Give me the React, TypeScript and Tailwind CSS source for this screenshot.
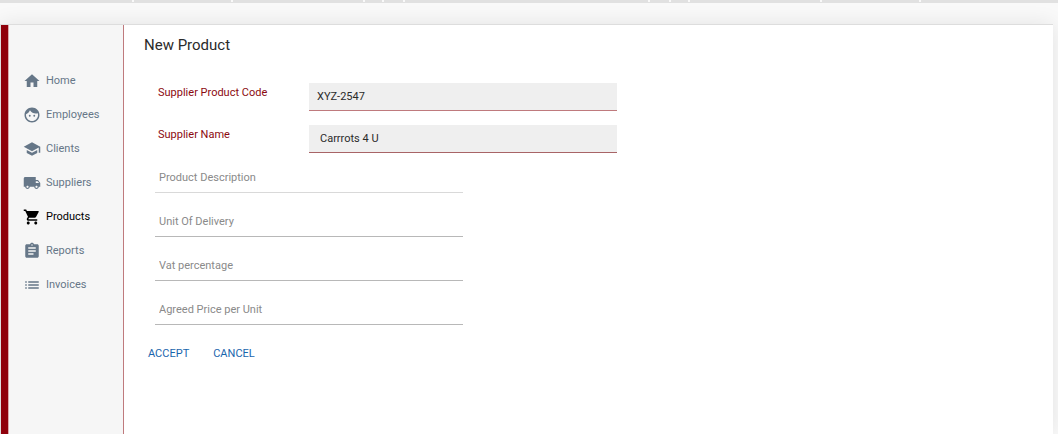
import { useState } from 'react';
import type { IconType } from 'react-icons';
import {
  MdAssignment,
  MdFace,
  MdHome,
  MdList,
  MdLocalShipping,
  MdSchool,
  MdShoppingCart,
} from 'react-icons/md';

const tabs = [
  'grow-[132]',
  'grow-[97]',
  'grow-[130]',
  'grow-[17]',
  'grow-[19]',
  'grow-[243]',
  'grow-[19]',
  'grow-[17]',
  'grow-[130]',
  'grow-[97]',
  'grow-[137]',
];

const navItems: { label: string; icon: IconType }[] = [
  { label: 'Home', icon: MdHome },
  { label: 'Employees', icon: MdFace },
  { label: 'Clients', icon: MdSchool },
  { label: 'Suppliers', icon: MdLocalShipping },
  { label: 'Products', icon: MdShoppingCart },
  { label: 'Reports', icon: MdAssignment },
  { label: 'Invoices', icon: MdList },
];

const detailFields = [
  { label: 'Product Description', line: 'border-[#d9d9d9]' },
  { label: 'Unit Of Delivery', line: 'border-[#b8b8b8]' },
  { label: 'Vat percentage', line: 'border-[#b8b8b8]' },
  { label: 'Agreed Price per Unit', line: 'border-[#b8b8b8]' },
];

function TabStrip() {
  return (
    <div className="flex h-[3px] shrink-0 gap-[2px] border-b border-[#e1e1e1]">
      {tabs.map((grow, i) => (
        <div key={i} className={`basis-0 bg-[#e1e1e1] ${grow}`} />
      ))}
    </div>
  );
}

function Sidebar() {
  return (
    <nav className="w-[116px] shrink-0 border-x border-l-[#d9a9ac] border-r-[#bf7a7d] bg-[#f6f6f6] pt-[39px]">
      <ul>
        {navItems.map(({ label, icon: Icon }) => (
          <li key={label}>
            <a
              href={`#${label.toLowerCase()}`}
              className={`flex h-[34px] items-center gap-[5px] pl-[14px] text-[11px] ${
                label === 'Products' ? 'text-black' : 'text-[#667788]'
              }`}
            >
              <Icon className="size-[18px]" />
              {label}
            </a>
          </li>
        ))}
      </ul>
    </nav>
  );
}

function ProductForm() {
  const [code, setCode] = useState('XYZ-2547');
  const [supplier, setSupplier] = useState('Carrrots 4 U');

  return (
    <form className="min-w-0 grow pt-[9px] pl-5" onSubmit={(e) => e.preventDefault()}>
      <h1 className="text-[15px] leading-[22px] text-[#2b2b2b]">New Product</h1>
      <div className="mt-[27px] flex flex-col gap-[14px] pl-[14px]">
        <div className="flex">
          <label htmlFor="code" className="w-[151px] pt-[2px] text-[11px] leading-4 text-[#8b0a10]">
            Supplier Product Code
          </label>
          <input
            id="code"
            value={code}
            onChange={(e) => setCode(e.target.value)}
            className="h-7 w-[308px] border-b border-[#bf7a7d] bg-[#efefef] px-2 text-[11px] text-[#2b2b2b] outline-none"
          />
        </div>
        <div className="flex">
          <label htmlFor="supplier" className="w-[151px] pt-[2px] text-[11px] leading-4 text-[#8b0a10]">
            Supplier Name
          </label>
          <input
            id="supplier"
            value={supplier}
            onChange={(e) => setSupplier(e.target.value)}
            className="h-7 w-[308px] border-b border-[#a86466] bg-[#efefef] px-[11px] text-[11px] text-[#2b2b2b] outline-none"
          />
        </div>
      </div>
      <div className="mt-2 flex flex-col gap-3 pl-[11px]">
        {detailFields.map(({ label, line }) => (
          <input
            key={label}
            aria-label={label}
            placeholder={label}
            className={`h-8 w-[308px] border-b bg-transparent px-1 pt-[2px] text-[11px] text-[#2b2b2b] outline-none placeholder:text-[#8a8a8a] ${line}`}
          />
        ))}
      </div>
      <div className="mt-[17px] flex gap-6 pl-1">
        <button type="submit" className="h-6 text-[11px] text-[#1a66ad]">
          ACCEPT
        </button>
        <button type="button" className="h-6 text-[11px] text-[#1a66ad]">
          CANCEL
        </button>
      </div>
    </form>
  );
}

export default function App() {
  return (
    <div className="flex min-h-screen flex-col overflow-hidden bg-[#f9f9f9] font-['Roboto',sans-serif]">
      <TabStrip />
      <main className="mt-[21px] mr-[5px] flex grow border-t border-l border-[#dddddd] bg-white shadow-[0_0_20px_rgba(0,0,0,0.09)]">
        <div className="w-[7px] shrink-0 bg-[#8f000b]" />
        <Sidebar />
        <ProductForm />
      </main>
    </div>
  );
}
